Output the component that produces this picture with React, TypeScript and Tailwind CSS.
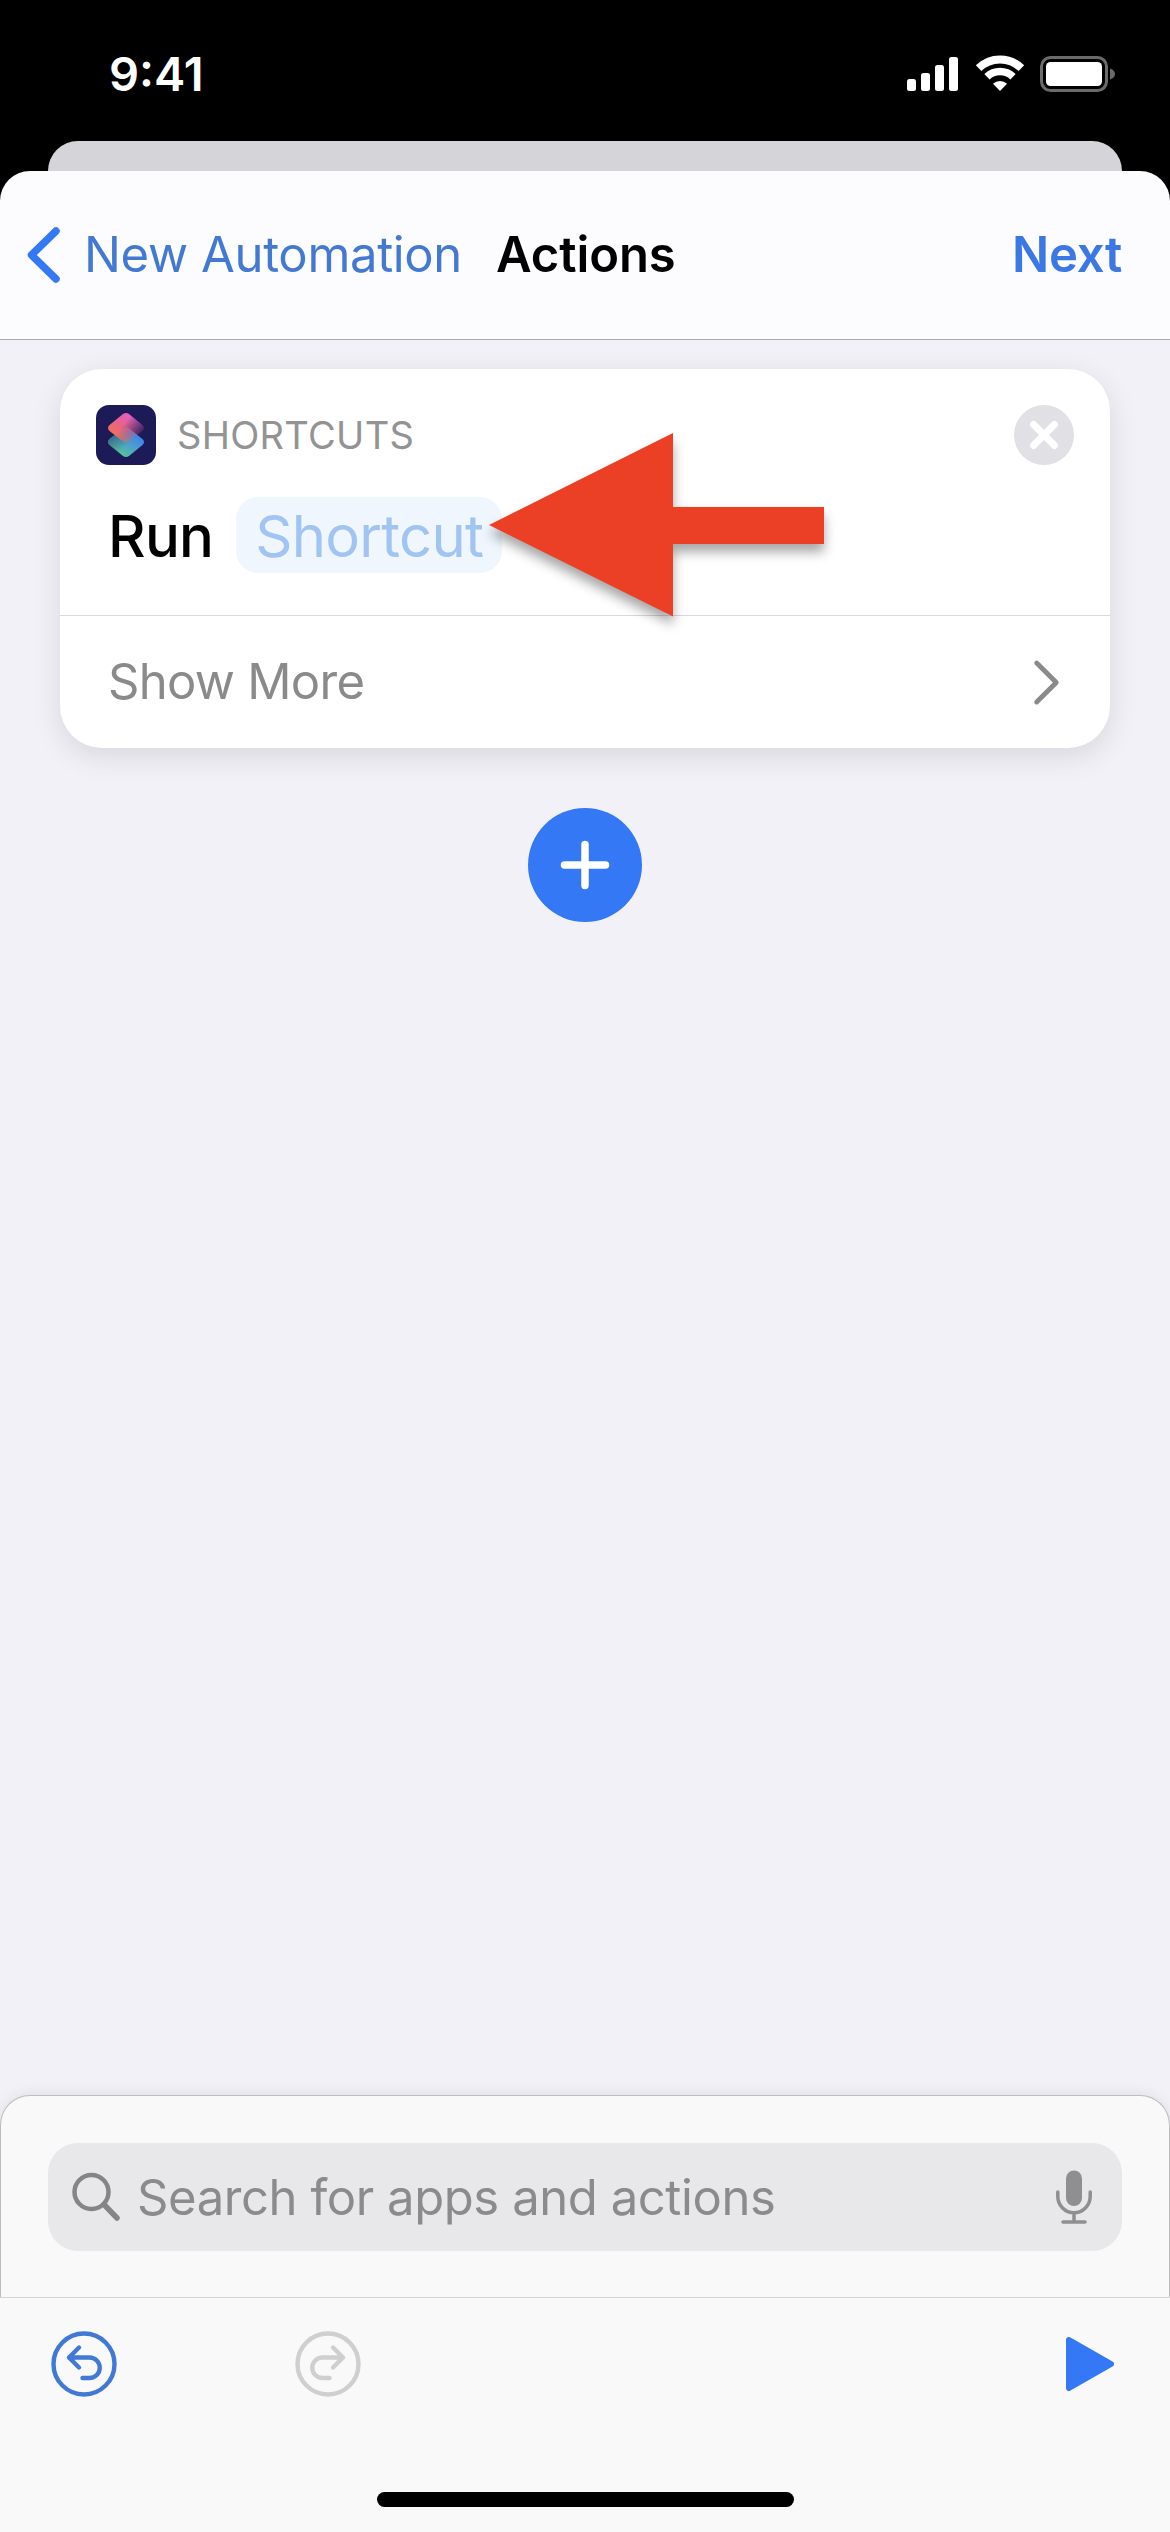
const BLUE = "#3478f6";

function StatusBar() {
  return (
    <div className="flex h-[141px] shrink-0 items-start justify-between pl-[109px] pr-[54px] text-white">
      <span className="mt-[46px] text-[47px] leading-[56px] font-semibold">9:41</span>
      <div className="mt-[55px] flex items-start">
        <svg width="52" height="37" viewBox="0 0 52 37" fill="currentColor">
          <rect x="0" y="24" width="9" height="12" rx="2.5" />
          <rect x="14" y="18" width="9" height="18" rx="2.5" />
          <rect x="28" y="10" width="9" height="26" rx="2.5" />
          <rect x="42" y="2" width="9" height="34" rx="2.5" />
        </svg>
        <svg className="ml-4" width="50" height="37" viewBox="0 0 50 37" fill="none" stroke="currentColor">
          <path d="M3.600 13.200a30.600 30.600 0 0 1 42.800 0" strokeWidth="8" />
          <path d="M12 21.800a18.600 18.600 0 0 1 26 0" strokeWidth="7.600" />
          <path d="M25 36l-7-7.200a9.900 9.900 0 0 1 14 0z" fill="currentColor" stroke="none" />
        </svg>
        <svg className="ml-[15px]" width="76" height="38" viewBox="0 0 76 38">
          <rect x="1.5" y="2.5" width="65" height="33" rx="9" fill="none" stroke="#6b6b6b" strokeWidth="3" />
          <rect x="6" y="7" width="56" height="24" rx="4.5" fill="#fff" />
          <path d="M70 13.500c3.300 1 5 3.200 5 5.500s-1.700 4.500-5 5.500z" fill="#6b6b6b" />
        </svg>
      </div>
    </div>
  );
}

function NavBar() {
  return (
    <header className="flex h-[169px] shrink-0 items-center rounded-t-[30px] border-b border-[#a9a9b0] bg-[#fcfcfe] pr-[48px] pl-[26px] text-[49px] leading-[60px]">
      <svg width="36" height="60" viewBox="0 0 36 60" fill="none" stroke={BLUE} strokeWidth="7.500" strokeLinecap="round" strokeLinejoin="round">
        <path d="M30 6L5.500 30L30 54" />
      </svg>
      <span className="ml-[22px] tracking-[-0.35px] text-[#4479d2]">New Automation</span>
      <h1 className="ml-[34px] font-semibold tracking-[-0.1px] text-black">Actions</h1>
      <span className="ml-auto font-semibold tracking-[-0.3px] text-[#3c78e4]">Next</span>
    </header>
  );
}

function ShortcutsIcon() {
  return (
    <svg width="60" height="60" viewBox="0 0 60 60">
      <defs>
        <linearGradient id="top" gradientUnits="userSpaceOnUse" x1="34" y1="9" x2="20" y2="31">
          <stop offset="0" stopColor="#e160c8" />
          <stop offset="0.5" stopColor="#e8628c" />
          <stop offset="1" stopColor="#f07058" />
        </linearGradient>
        <linearGradient id="fade" gradientUnits="userSpaceOnUse" x1="24" y1="24" x2="42" y2="38">
          <stop offset="0" stopColor="#fff" />
          <stop offset="1" stopColor="#fff" stopOpacity="0" />
        </linearGradient>
        <mask id="topMask">
          <rect width="60" height="60" fill="url(#fade)" />
        </mask>
        <linearGradient id="bottom" x1="0.9" y1="0.2" x2="0.3" y2="0.9">
          <stop offset="0" stopColor="#3c7df0" />
          <stop offset="0.5" stopColor="#4a9fd0" />
          <stop offset="1" stopColor="#58c493" />
        </linearGradient>
        <linearGradient id="dim" x1="0" y1="0.3" x2="0.45" y2="0.7">
          <stop offset="0" stopColor="#2f4f7c" stopOpacity="0.8" />
          <stop offset="1" stopColor="#2f4f7c" stopOpacity="0" />
        </linearGradient>
      </defs>
      <rect width="60" height="60" rx="13" fill="#1c1a57" />
      <path d="M27 23.500q3-2 6 0L46.500 34q3 3 0 6L33 51q-3 2.200-6 0L13.500 40q-3-3 0-6z" fill="url(#bottom)" />
      <path d="M27 23.500q3-2 6 0L46.500 34q3 3 0 6L33 51q-3 2.200-6 0L13.500 40q-3-3 0-6z" fill="url(#dim)" />
      <path d="M27 9q3-2.200 6 0L46.500 20q3 3 0 6L33 36.500q-3 2.200-6 0L13.500 26q-3-3 0-6z" fill="url(#top)" mask="url(#topMask)" />
    </svg>
  );
}

function ActionCard() {
  return (
    <section className="relative mx-[60px] mt-[29px] h-[379px] rounded-[42px] bg-white shadow-[0_8px_30px_rgba(0,0,0,0.11)]">
      <div className="flex h-[247px] flex-col border-b border-[#d9d9dc] pt-9">
        <div className="flex items-center pr-9 pl-9">
          <ShortcutsIcon />
          <span className="ml-[21px] text-[38px] leading-[60px] tracking-[0.3px] text-[#939393]">SHORTCUTS</span>
          <svg className="ml-auto" width="60" height="60" viewBox="0 0 60 60">
            <circle cx="30" cy="30" r="30" fill="#e0e0e5" />
            <path d="M19.500 19.500l21 21M40.500 19.500l-21 21" stroke="#fff" strokeWidth="7" strokeLinecap="round" />
          </svg>
        </div>
        <div className="mt-8 flex h-[76px] items-center pl-[48px] text-[58px] leading-[78px] tracking-[-0.7px]">
          <span className="pt-px font-medium text-black">Run</span>
          <span className="ml-[23px] h-[76px] w-[266px] rounded-[22px] bg-[#eff6fe] text-center text-[#a2c4f3]">Shortcut</span>
        </div>
      </div>
      <div className="flex h-[132px] items-center justify-between pr-[49px] pl-[48px] text-[49px] leading-[60px] text-[#8a8a8a]">
        <span className="tracking-[-0.7px]">Show More</span>
        <svg width="30" height="48" viewBox="0 0 30 48" fill="none" stroke="currentColor" strokeWidth="4.800" strokeLinecap="round" strokeLinejoin="round">
          <path d="M5.700 5L25.300 24.500L5.700 44" />
        </svg>
      </div>

      {/* arrow pointing at the Shortcut field */}
      <svg className="absolute top-[54px] left-[419px] overflow-visible drop-shadow-[0_8px_6px_rgba(0,0,0,0.35)]" width="356" height="204" viewBox="0 0 356 204">
        <path d="M10 102L194 10v74h151v37H194v72.500z" fill="#ec4026" />
      </svg>
    </section>
  );
}

function SearchPanel() {
  return (
    <div className="h-[202px] shrink-0 rounded-t-[30px] border border-b-0 border-[#bdbdbf] bg-[#f9f9f9] px-[47px] pt-[47px] shadow-[0_-2px_14px_rgba(0,0,0,0.07)]">
      <div className="flex h-[108px] items-center rounded-[30px] bg-[#e8e8ea] pr-[29px] pl-[23px] text-[49px] leading-[60px] text-[#8b8b8d]">
        <svg width="50" height="50" viewBox="0 0 50 50" fill="none" stroke="#858587" strokeWidth="4.500" strokeLinecap="round">
          <circle cx="20.500" cy="20" r="17" />
          <path d="M33 32.500l13 13.500" strokeWidth="5.500" />
        </svg>
        <span className="ml-[16px] pt-px tracking-[-0.42px]">Search for apps and actions</span>
        <svg className="ml-auto" width="38" height="56" viewBox="0 0 38 56" fill="none" stroke="#8f8f91" strokeWidth="3.500" strokeLinecap="round">
          <rect x="11" y="1.500" width="16" height="35.500" rx="8" fill="#8f8f91" stroke="none" />
          <path d="M2.800 23v4.500a16.200 16.200 0 0 0 32.400 0v-4.500M19 44v9M8 53h22" />
        </svg>
      </div>
    </div>
  );
}

const UndoIcon = ({ className }: { className: string }) => (
  <svg className={className} width="66" height="66" viewBox="0 0 66 66" fill="none" stroke="currentColor" strokeWidth="4.400" strokeLinecap="round" strokeLinejoin="round">
    <circle cx="33" cy="33" r="30.500" />
    <path d="M28 16.500L18 26.500l10 10M18 26.500h20.500a10.200 10.200 0 0 1 0 20.500H31.500" />
  </svg>
);

function Toolbar() {
  return (
    <footer className="flex h-[235px] shrink-0 flex-col border-t border-[#d4d4d6] bg-[#f9f9f9]">
      <div className="mt-[33px] flex items-center pr-[54px] pl-[51px]">
        <UndoIcon className="text-[#4179d6]" />
        <UndoIcon className="ml-[178px] -scale-x-100 text-[#cfcfcf]" />
        <svg className="ml-auto" width="52" height="58" viewBox="0 0 52 58">
          <path d="M5 5l42 24L5 53z" fill={BLUE} stroke={BLUE} strokeWidth="6" strokeLinejoin="round" />
        </svg>
      </div>
      <div className="mx-auto mt-[95px] h-[15px] w-[417px] rounded-full bg-black" />
    </footer>
  );
}

export default function App() {
  return (
    <div className="flex h-[2532px] w-[1170px] flex-col overflow-hidden bg-black font-['Inter',sans-serif]">
      <StatusBar />
      <div className="mx-[48px] h-[30px] shrink-0 rounded-t-[30px] bg-[#d5d5d9]" />
      <NavBar />
      <main className="flex flex-1 flex-col bg-[#f2f1f7]">
        <ActionCard />
        <button className="mx-auto mt-[60px] flex size-[114px] items-center justify-center rounded-full bg-[#3478f6]">
          <svg width="50" height="50" viewBox="0 0 50 50" stroke="#fff" strokeWidth="7.500" strokeLinecap="round">
            <path d="M25 4.500v41M4.500 25h41" />
          </svg>
        </button>
      </main>
      <div className="shrink-0 bg-[#f2f1f7]">
        <SearchPanel />
      </div>
      <Toolbar />
    </div>
  );
}
